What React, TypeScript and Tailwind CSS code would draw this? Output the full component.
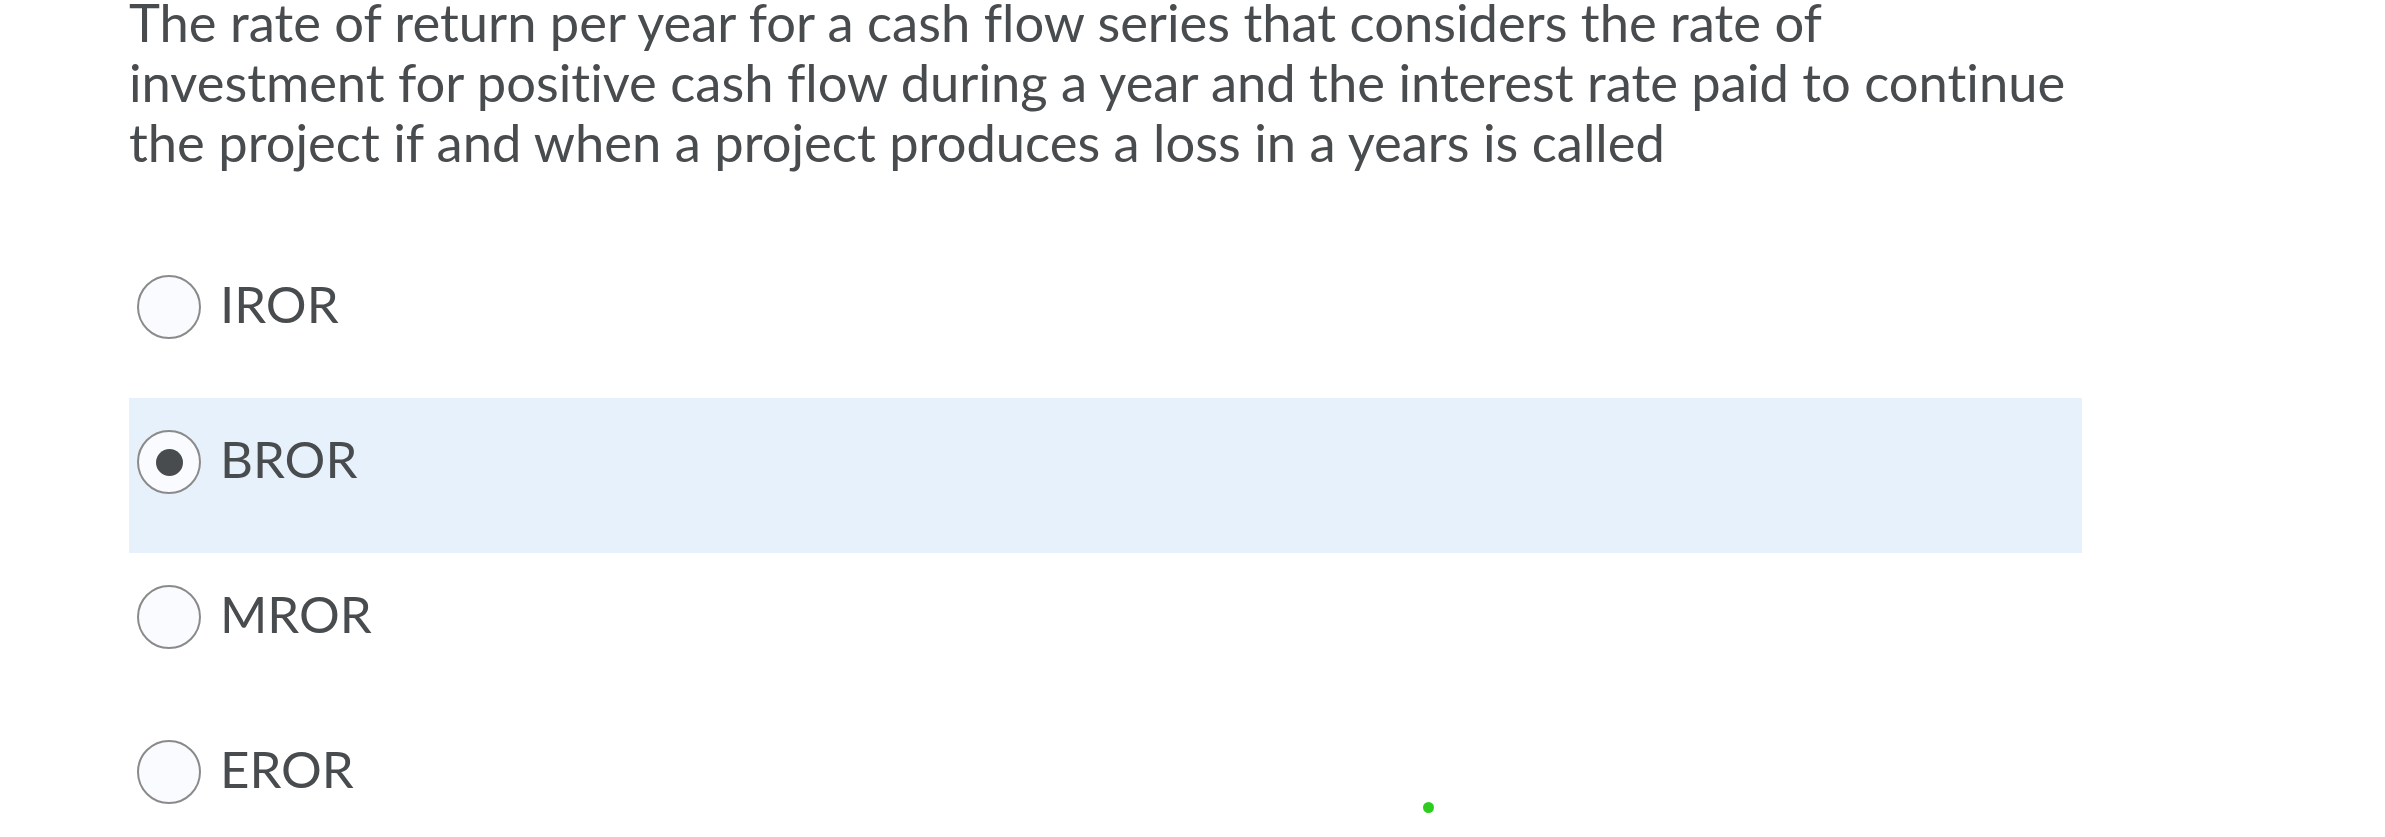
const OPTIONS = [
  { id: 'iror', label: 'IROR' },
  { id: 'bror', label: 'BROR' },
  { id: 'mror', label: 'MROR' },
  { id: 'eror', label: 'EROR' },
];

function Radio({ checked }: { checked: boolean }) {
  return (
    <span className="flex h-[64px] w-[64px] shrink-0 items-center justify-center rounded-full border-2 border-[#8a8a8a] bg-[#f9fbff]">
      {checked && <span className="h-[27px] w-[27px] rounded-full bg-[#494c4e]" />}
    </span>
  );
}

export default function App() {
  const selected = 'bror';

  return (
    <div className="relative h-[837px] overflow-hidden bg-white font-['Lato',sans-serif] text-[#494c4e] [font-variant-ligatures:none]">
      <div className="ml-[129px] w-[1953px]">
        <p className="-mt-[8px] text-[52.5px] leading-[60px]">
          The rate of return per year for a cash flow series that considers the rate of
          <br />
          investment for positive cash flow during a year and the interest rate paid to continue
          <br />
          the project if and when a project produces a loss in a years is called
        </p>

        <div className="mt-[71px]">
          {OPTIONS.map((o) => (
            <label
              key={o.id}
              className={`flex h-[155px] items-start gap-[19px] pl-[8px] pt-[32px] ${o.id === selected ? 'bg-[#e7f1fc]' : ''}`}
            >
              <Radio checked={o.id === selected} />
              <span className="-mt-[1px] text-[51px] leading-[60px]">{o.label}</span>
            </label>
          ))}
        </div>
      </div>

      {/* status dot */}
      <span className="absolute left-[1423px] top-[802px] h-[11px] w-[11px] rounded-full bg-[#2fcc1f]" />
    </div>
  );
}
